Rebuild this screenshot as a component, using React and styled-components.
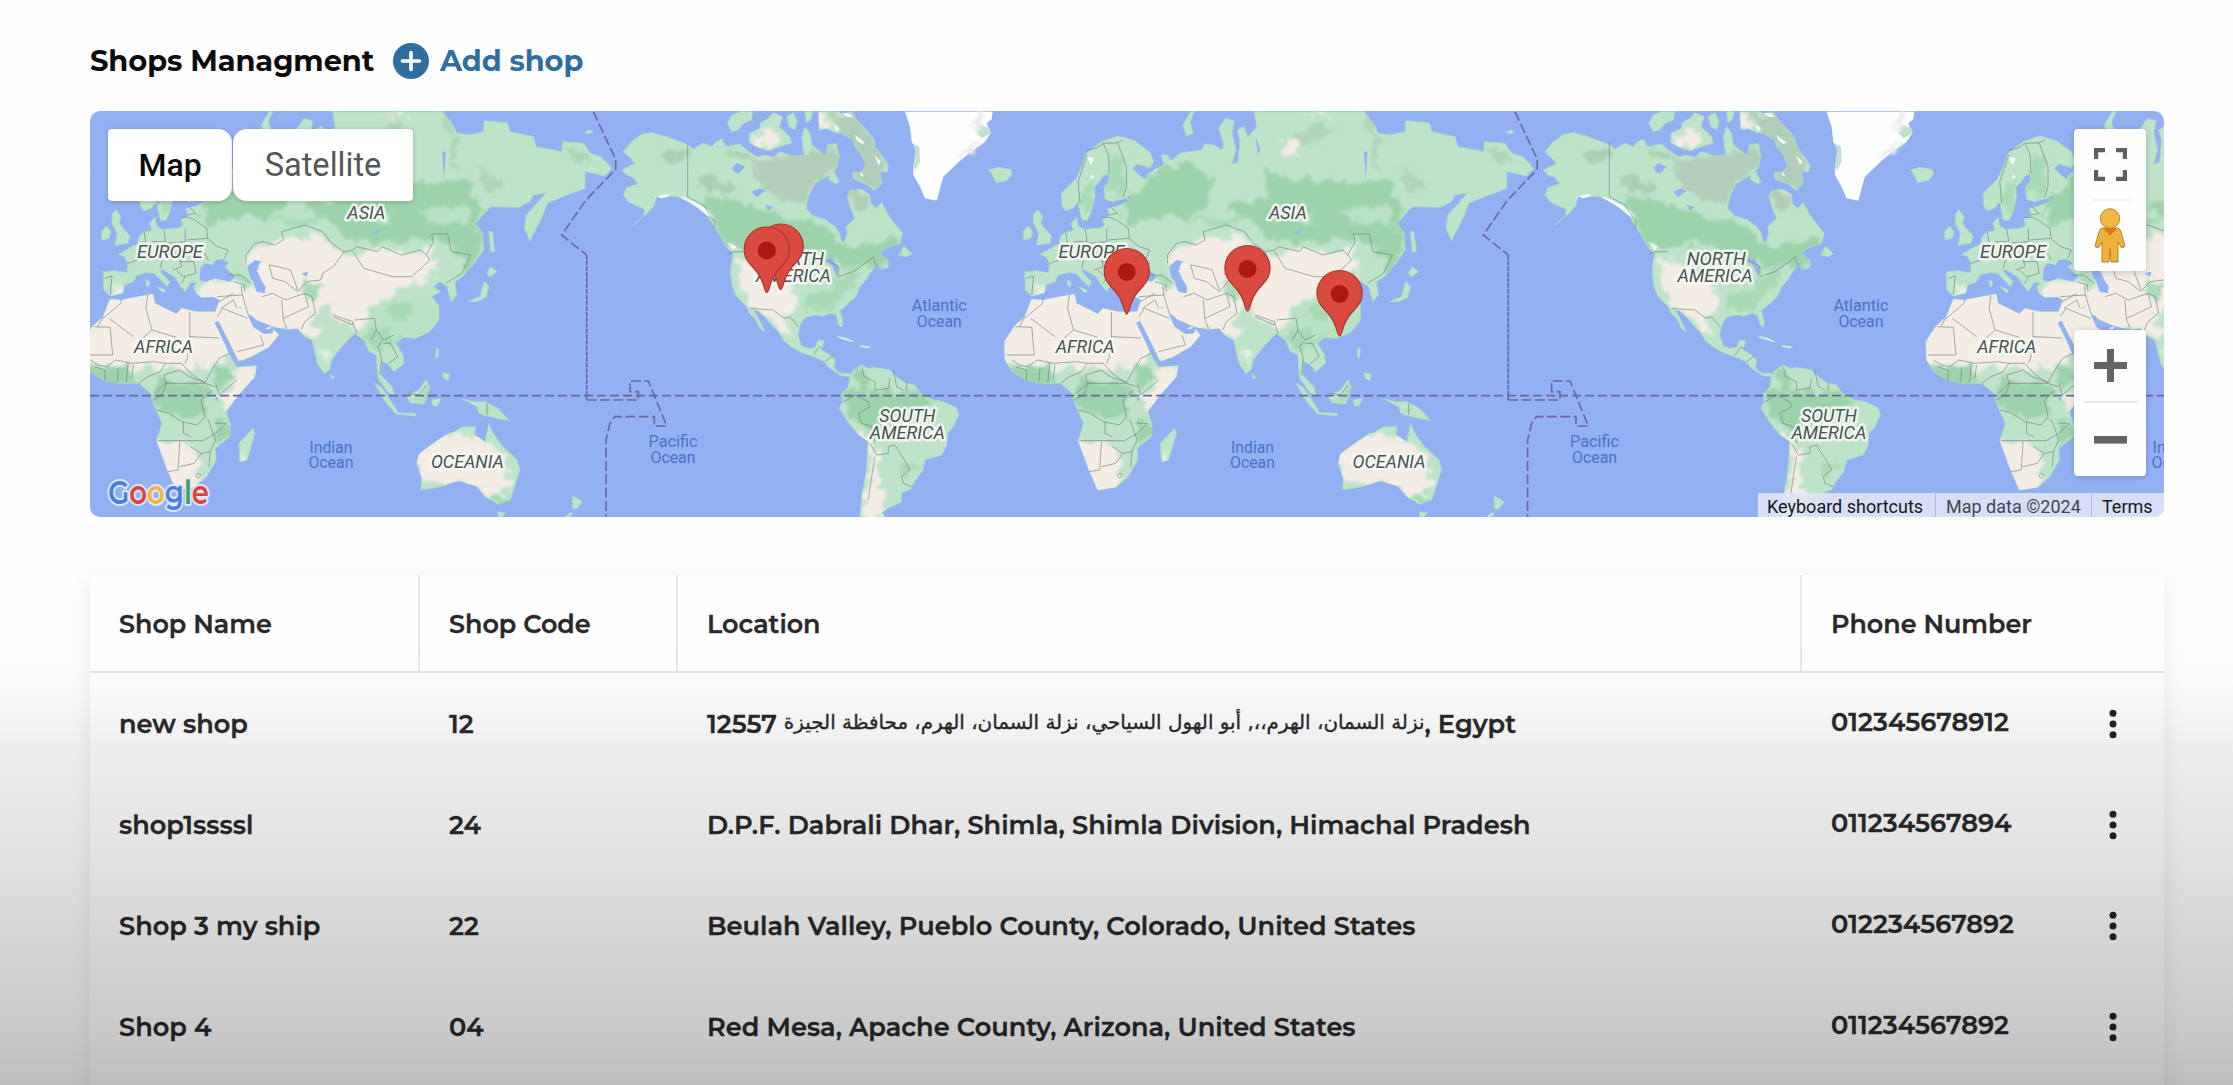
import React from "react";
import styled, { createGlobalStyle } from "styled-components";

const GlobalStyle = createGlobalStyle`
  * { box-sizing: border-box; }
  html, body { margin: 0; padding: 0; background: #fefefe; overflow: hidden; }
  button { border: 0; padding: 0; background: none; font: inherit; color: inherit; cursor: pointer; }
`;

const ui = `Montserrat, Inter, "Noto Sans", sans-serif`;
const mapFont = `Roboto, "Liberation Sans", sans-serif`;

const Page = styled.main`
  position: relative;
  width: 100%;
  height: 1085px;
  padding: 36px 69px 0 90px;
  overflow: hidden;
  background: #fefefe;
  font-family: ${ui};
  color: #29292b;
`;

const Fade = styled.div`
  position: absolute;
  inset: 640px 0 0 0;
  pointer-events: none;
  background: linear-gradient(
    rgba(0, 0, 0, 0) 0%,
    rgba(0, 0, 0, 0.01) 9%,
    rgba(0, 0, 0, 0.06) 23%,
    rgba(0, 0, 0, 0.115) 49%,
    rgba(0, 0, 0, 0.17) 70%,
    rgba(0, 0, 0, 0.215) 91%,
    rgba(0, 0, 0, 0.26) 100%
  );
`;

const Header = styled.header`
  display: flex;
  align-items: center;
  height: 49px;
  gap: 18px;
`;

const Title = styled.h1`
  margin: 0;
  width: 285px;
  font-size: 28.9px;
  font-weight: 700;
  letter-spacing: -0.1px;
  white-space: nowrap;
  color: #0b0b0c;
`;

const AddButton = styled.button`
  display: flex;
  align-items: center;
  gap: 11px;
  color: #2e6f9f;
  font-size: 28.8px;
  font-weight: 700;
  letter-spacing: -0.1px;
  white-space: nowrap;
`;

const MapFrame = styled.section`
  position: relative;
  width: 2074px;
  height: 406px;
  margin-top: 26px;
  border-radius: 10px;
  overflow: hidden;
  background: #93b1f2;
  font-family: ${mapFont};
`;

const MapCanvas = styled.svg`
  display: block;
  width: 100%;
  height: 100%;
`;

const TypeSwitch = styled.div`
  position: absolute;
  left: 18px;
  top: 18px;
  display: flex;
  gap: 1px;
`;

const TypeButton = styled.button`
  width: ${(p) => p.$width}px;
  height: 72px;
  border-radius: ${(p) => (p.$first ? "4px 14px 14px 4px" : "14px 4px 4px 14px")};
  background: #fff;
  box-shadow: 0 1px 5px rgba(0, 0, 0, 0.2);
  font-size: ${(p) => (p.$first ? 32 : 32.6)}px;
  font-weight: ${(p) => (p.$first ? 500 : 400)};
  color: ${(p) => (p.$first ? "#0a0a0a" : "#565656")};
`;

const ControlStack = styled.div`
  position: absolute;
  right: 18px;
  top: ${(p) => p.$top}px;
  width: 72px;
  display: flex;
  flex-direction: column;
  align-items: center;
  border-radius: 4px;
  background: #fefefe;
  box-shadow: 0 1px 6px rgba(0, 0, 0, 0.2);
`;

const Control = styled.button`
  display: flex;
  align-items: center;
  justify-content: center;
  width: 72px;
  height: ${(p) => p.$height}px;
`;

const ControlRule = styled.div`
  width: ${(p) => p.$width}px;
  height: 2px;
  background: ${(p) => p.$color};
`;

const Attribution = styled.div`
  position: absolute;
  right: 0;
  bottom: 0;
  display: flex;
  height: 24px;
  color: #2a2a2e;
  font-size: 18px;
  line-height: 27px;
`;

const Credit = styled.span`
  width: ${(p) => p.$width}px;
  padding-left: ${(p) => (p.$rule ? 10 : 9)}px;
  border-left: ${(p) => (p.$rule ? "1px solid #a9b8e2" : "0")};
  background: rgba(222, 228, 246, 0.9);
  color: ${(p) => (p.$soft ? "#45464c" : "#16171b")};
  white-space: nowrap;
`;

const Table = styled.section`
  width: 2074px;
  height: 560px;
  margin-top: 58px;
  background: #fefefe;
  box-shadow: 0 6px 20px rgba(0, 0, 0, 0.085);
`;

const Row = styled.div`
  display: grid;
  grid-template-columns: 330px 258px 1124px 362px;
  height: 101px;
  font-size: 25.6px;
  font-weight: 600;
  letter-spacing: 0.04px;
  -webkit-text-stroke: 0.35px currentColor;
`;

const HeadRow = styled(Row)`
  height: 98px;
  font-size: 25.4px;
  letter-spacing: 0;
  border-bottom: 2px solid #e1e1e1;
`;

const Cell = styled.div`
  display: flex;
  align-items: center;
  padding: 0 32px 0 29px;
  white-space: nowrap;
`;

const HeadCell = styled(Cell)`
  border-right: ${(p) => (p.$last ? "0" : "2px solid #e7e7e7")};
`;

const PhoneCell = styled(Cell)`
  justify-content: space-between;
`;

const Phone = styled.span`
  padding-bottom: 5px;
`;

const MenuButton = styled.button`
  display: flex;
  margin-right: 14px;
`;

const Address = styled.span`
  display: flex;
  align-items: center;
`;

const Arabic = styled.bdi`
  margin: -3px 0 0 7px;
  font-family: "DejaVu Sans", sans-serif;
  font-size: 19.9px;
  font-weight: 400;
  letter-spacing: 0;
`;

const LAND = "#bfe3c9";
const CREAM = "#f3ede5";
const GREEN = "#9dd3ab";

const AMERICAS =
  "M185,210 L225,190 L212,176 L190,155 L215,125 L245,103 L275,98 L320,110 L360,125 L385,135 L400,147 L430,130 L455,140 L468,125 L485,118 L498,140 L540,132 L560,150 L590,170 L615,165 L640,172 L660,155 L700,168 L732,165 L725,110 L735,80 L750,100 L756,135 L775,150 L798,168 L803,135 L830,130 L838,170 L830,205 L800,230 L765,250 L745,290 L738,325 L760,348 L795,358 L825,380 L838,398 L843,422 L852,428 L862,400 L858,380 L885,355 L872,325 L862,290 L868,272 L905,268 L930,285 L932,310 L948,325 L965,308 L985,345 L1010,378 L1028,400 L1020,430 L975,445 L960,462 L985,480 L985,503 L960,508 L955,488 L930,520 L918,540 L900,560 L887,590 L860,615 L840,632 L848,665 L846,682 L836,675 L828,645 L810,640 L790,648 L765,645 L735,652 L720,675 L714,705 L725,738 L745,745 L765,742 L775,720 L792,722 L785,750 L815,768 L825,780 L822,805 L840,820 L870,820 L872,829 L845,828 L810,805 L790,783 L755,768 L725,758 L695,742 L672,722 L655,695 L635,675 L612,648 L590,630 L583,632 L600,665 L615,695 L600,685 L585,655 L568,640 L562,622 L530,590 L517,560 L512,520 L514,490 L520,462 L500,442 L485,415 L463,380 L445,350 L415,325 L390,308 L360,292 L330,288 L305,295 L290,288 L282,318 L262,340 L218,376 L250,350 L255,328 L230,318 L205,305 L190,285 L200,262 L235,252 L218,232 L200,225 Z " +
  "M870,830 L880,810 L905,795 L925,805 L945,802 L990,810 L1010,830 L1035,848 L1065,855 L1082,880 L1120,900 L1150,905 L1188,922 L1197,945 L1180,980 L1163,1000 L1160,1035 L1145,1065 L1095,1080 L1088,1112 L1060,1150 L1052,1168 L1025,1178 L1025,1205 L985,1225 L965,1237 L978,1255 L900,1255 L905,1190 L918,1120 L925,1025 L895,1003 L870,975 L838,925 L848,905 L846,880 L865,862 Z";

const ARCTIC =
  "M502,70 L515,45 L540,35 L578,35 L575,60 L550,70 L535,90 L515,95Z M568,100 L600,85 L600,70 L625,55 L640,38 L668,50 L658,80 L690,110 L695,130 L665,138 L625,152 L600,145 L568,128Z M680,50 L700,38 L712,65 L705,90 L688,80Z M735,35 L758,35 L752,60 L738,68Z M775,35 L835,35 L850,45 L875,35 L895,65 L915,85 L940,115 L945,140 L965,165 L985,195 L982,215 L960,215 L965,250 L945,272 L918,252 L880,237 L878,218 L905,215 L918,195 L905,165 L885,140 L880,120 L845,100 L825,98 L800,85 L778,90Z M805,215 L815,200 L838,245 L828,252 L808,240Z M1015,465 L1032,438 L1055,462 L1040,470Z M75,97 L90,90 L98,97 L85,102Z";

const EURASIA =
  "M125,515 L160,512 L192,518 L195,490 L185,470 L168,463 L205,440 L222,432 L225,410 L240,395 L262,392 L255,370 L270,352 L275,378 L290,388 L330,385 L348,378 L343,358 L362,348 L358,325 L385,318 L420,302 L408,295 L370,305 L350,298 L348,262 L362,240 L362,222 L345,228 L335,245 L320,262 L322,290 L312,335 L300,362 L285,360 L280,335 L275,305 L260,325 L238,332 L230,318 L228,280 L270,235 L285,200 L298,160 L340,125 L385,108 L430,120 L475,155 L487,185 L475,203 L440,192 L428,205 L440,220 L462,238 L470,222 L492,208 L515,195 L508,165 L525,165 L535,182 L562,158 L620,150 L630,132 L655,135 L678,150 L682,130 L668,85 L688,55 L712,62 L706,100 L717,150 L705,192 L722,188 L728,120 L720,90 L738,78 L750,110 L775,82 L768,35 L1075,35 L1105,75 L1115,100 L1150,105 L1190,95 L1192,62 L1258,68 L1265,95 L1330,110 L1338,140 L1410,155 L1412,125 L1470,130 L1490,160 L1520,170 L1550,205 L1530,228 L1505,222 L1475,215 L1475,265 L1425,285 L1368,310 L1355,350 L1320,422 L1305,385 L1310,345 L1340,310 L1365,278 L1330,285 L1320,305 L1290,322 L1210,320 L1168,370 L1188,400 L1190,450 L1165,490 L1132,530 L1110,545 L1115,585 L1100,605 L1088,560 L1068,545 L1050,560 L1070,575 L1045,590 L1065,615 L1065,660 L1040,695 L1000,715 L965,712 L945,730 L965,765 L968,790 L940,815 L925,795 L905,782 L903,825 L935,860 L940,885 L925,880 L895,835 L890,765 L870,755 L855,720 L830,700 L795,738 L765,780 L760,808 L745,822 L725,790 L710,720 L690,710 L670,685 L640,688 L600,680 L575,668 L545,655 L530,635 L510,620 L445,650 L440,635 L452,600 L435,590 L400,592 L385,580 L378,560 L388,548 L370,548 L355,575 L340,555 L325,530 L290,508 L285,515 L312,545 L305,560 L268,520 L245,518 L220,525 L210,545 L185,555 L180,578 L145,588 L127,570Z " +
  "M145,598 L175,600 L265,582 L270,610 L330,642 L345,625 L385,635 L440,635 L450,620 L520,625 L545,655 L570,692 L590,680 L600,685 L617,705 L590,740 L540,770 L500,785 L485,755 L470,740 L448,690 L470,745 L490,785 L500,802 L555,797 L550,830 L500,890 L470,935 L482,975 L480,1010 L440,1045 L442,1080 L415,1130 L380,1162 L330,1170 L305,1110 L275,1022 L290,970 L265,910 L258,880 L225,850 L170,850 L130,842 L90,815 L70,780 L68,725 L95,680 L125,650Z";

const ISLANDS =
  "M150,342 L162,330 L175,350 L170,370 L200,408 L195,430 L158,436 L165,402 L150,370Z M120,395 L135,378 L147,395 L142,415 L122,420Z M25,210 L50,202 L85,208 L90,222 L75,242 L45,248 L35,225Z M508,1085 L505,1030 L545,985 L550,1000 L528,1080Z M1145,605 L1180,590 L1192,545 L1205,558 L1198,592 L1172,605Z M1200,520 L1210,500 L1228,515 L1208,530Z M1205,393 L1215,395 L1222,455 L1210,455Z M885,850 L905,862 L945,925 L950,938 L1000,940 L1000,948 L945,942 L915,905Z M975,888 L1010,870 L1030,838 L1040,860 L1025,912 L985,908Z M1045,900 L1070,895 L1062,918 L1048,918Z M1132,898 L1165,905 L1195,905 L1230,925 L1262,962 L1228,955 L1200,948 L1178,940 L1172,920Z M1058,745 L1065,748 L1062,775 L1056,770Z M1075,818 L1095,822 L1092,842 L1078,835Z M762,822 L773,832 L765,837Z M590,35 L568,75 L578,108 L597,100 L588,65 L600,35Z M1230,1235 L1252,1238 L1242,1252 L1232,1250Z M1440,1188 L1468,1205 L1450,1228 L1440,1225Z M1418,1252 L1432,1238 L1440,1240 L1430,1253Z M275,560 L300,570 L295,578Z M245,540 L255,545 L253,560 L246,558Z M1475,95 L1490,90 L1495,98Z M1010,1062 L1050,1030 L1092,1000 L1105,998 L1130,980 L1168,980 L1165,1005 L1195,1025 L1205,972 L1218,1000 L1240,1035 L1285,1080 L1292,1110 L1280,1150 L1265,1200 L1230,1212 L1195,1190 L1170,1158 L1120,1142 L1070,1160 L1015,1170 L1018,1135 L1003,1090Z";

const PINS = [
  [780.7, 289],
  [766.8, 292],
  [1126.8, 313.5],
  [1247.5, 310.5],
  [1339.6, 335.5],
];

const LANDMASS_LABELS = [
  ["ASIA", 1287.9, 218.5, 38],
  ["EUROPE", 1091.5, 258, 66],
  ["AFRICA", 1085.2, 352.7, 59],
  ["OCEANIA", 1389, 468, 73],
  ["NORTH", 794.6, 264.5, 59],
  ["AMERICA", 793.5, 281.5, 75],
  ["SOUTH", 907.3, 422, 56],
  ["AMERICA", 907.3, 439.2, 75],
];

const OCEAN_LABELS = [
  ["Indian", 1252.5, 452.5, 43],
  ["Ocean", 1252.5, 468, 45],
  ["Atlantic", 939.3, 310.5, 55],
  ["Ocean", 939.3, 327, 45],
  ["Pacific", 673, 446.5, 49],
  ["Ocean", 673, 462.5, 45],
];

const border = { fill: "none", stroke: "#6f7c78", strokeWidth: 2.4, strokeLinejoin: "round", opacity: 0.75 };

function World() {
  return (
    <g id="world">
      <g transform="translate(560 100) scale(0.33333)">
        <path d={AMERICAS + ARCTIC} fill={LAND} stroke="#a3dac6" strokeWidth="2.5" filter="url(#coast)" />
        <g clipPath="url(#americasClip)">
          <g filter="url(#terrain)">
            <path d="M430,275 L520,300 L600,330 L690,350 L790,380 L850,440 L940,430 L1030,410 L985,500 L900,500 L840,500 L760,460 L650,430 L560,450 L500,440 L450,350Z" fill={GREEN} />
            <path d="M580,180 L700,165 L835,130 L830,205 L760,250 L740,320 L660,305 L610,270 L580,230Z" fill="#b4cfb9" />
            <path d="M860,270 L930,280 L930,310 L900,335 L870,320Z" fill="#b2cdb6" />
            <path d="M800,35 L900,60 L985,195 L960,270 L880,235 L905,165 L840,100Z" fill="#b1ceba" />
            <path d="M410,225 L480,230 L520,260 L500,280 L420,255Z M290,165 L380,140 L400,160 L330,185Z M500,140 L560,150 L590,190 L520,175Z" fill="#accfb4" />
            <path d="M568,118 L640,85 L660,120 L620,150Z M780,35 L800,35 L798,80 L782,88Z" fill={CREAM} />
            <path d="M740,590 L860,580 L820,630 L740,640Z M820,540 L900,500 L880,560 L800,600Z" fill="#a9d9b5" />
            <path d="M535,478 L560,470 L700,560 L705,600 L700,640 L672,650 L692,712 L670,700 L640,655 L580,622 L545,575 L540,520Z" fill={CREAM} />
            <path d="M845,870 L1060,870 L1130,905 L1060,940 L960,950 L960,1000 L890,980 L850,920Z M880,800 L940,860 L900,880Z" fill={GREEN} />
            <path d="M880,985 L945,1030 L965,1065 L950,1110 L965,1180 L975,1255 L915,1255 L928,1110 L935,1050Z" fill={CREAM} />
            <path d="M1010,1080 L1080,1090 L1040,1140 L1020,1120Z" fill="#a9d9b5" />
          </g>
          <path d="M285,290 L320,282 L345,294 L370,290 L410,310 L445,330 L460,355 L440,345 L400,318 L345,300 L290,302Z M500,425 L530,440 L520,450Z" fill="#f5f9f8" filter="url(#coast)" />
          <path d="M515,205 L530,190 L555,200 L535,222Z M575,275 L600,265 L615,272 L590,292Z M615,315 L640,320 L625,332Z M540,212 L525,218 L518,210Z M790,480 L815,475 L835,500 L830,530 L815,495Z" fill="#93b2f2" filter="url(#coast)" />
        </g>
        <path d="M1035,35 L1298,35 L1295,58 L1280,70 L1292,100 L1275,125 L1240,150 L1200,182 L1150,230 L1130,302 L1095,295 L1080,260 L1060,225 L1060,200 L1068,150 L1055,125 L1050,80Z" fill="#fdfefe" filter="url(#coast)" />
        <path d="M1058,130 L1078,140 L1080,185 L1066,210 L1060,200 L1068,160Z M1262,75 L1290,85 L1294,100 L1265,115 L1250,98Z" fill="#bfdfcf" filter="url(#coast)" />
        <path d="M1205,180 L1240,150 L1275,122 L1220,135 L1190,180Z M1240,35 L1270,35 L1245,95Z" fill="#ecebe9" filter="url(#terrain)" />
        <path d="M845,40 L865,38 L880,52 L862,50Z M885,105 L915,128 L905,132 L890,120Z M943,165 L963,185 L955,195Z M820,72 L838,85 L830,95Z M904,215 L912,230 L900,225Z" fill="#f7fbfa" />
        <path d="M828,708 L855,712 L885,725 L870,725 L835,714Z M900,735 L935,740 L925,745 L902,742Z" fill="#c9ead8" />
        <path d="M383,130 L383,290 L430,315 L463,365 L462,385 M505,462 L520,455 L560,455 M800,480 L835,500 L835,530 L880,515 L930,480 L940,470 L950,500 M570,625 L640,630 L672,655 L690,650 L715,680 M760,765 L778,740 L790,748 M795,785 L818,768 M905,800 L912,830 L945,845 L945,870 L985,865 L990,835 M1000,812 L1010,860 L1030,870 M1040,845 L1040,870 M850,905 L885,885 L925,905 L930,920 L895,940 L905,970 L935,980 L945,1030 M930,1030 L950,1065 L985,1060 L985,1040 L1005,1035 L1020,1060 L1040,1090 L1050,1110 L1025,1130 L1030,1150 L1055,1160 M945,1070 L935,1130 L925,1200" {...border} />
      </g>

      <g transform="translate(980 100) scale(0.357143 0.33333)">
        <path d={EURASIA + ISLANDS} fill={LAND} stroke="#a3dac6" strokeWidth="2.5" filter="url(#coast)" />
        <g clipPath="url(#eurasiaClip)">
          <g filter="url(#terrain)">
            <path d="M400,310 L470,230 L520,200 L600,190 L650,240 L640,320 L580,355 L470,350 L410,380Z" fill={GREEN} />
            <path d="M800,200 L830,215 L860,240 L1160,245 L1160,290 L1200,320 L1165,380 L1190,450 L1140,520 L1110,440 L1050,410 L960,430 L800,420 L760,370 L700,340 L700,310 L800,300Z" fill={GREEN} />
            <path d="M1010,330 L1150,320 L1160,370 L1040,370Z M870,350 L940,340 L920,390Z" fill="#b9e1c4" />
            <path d="M355,250 L365,170 L400,165 L410,270 L370,300Z M280,260 L320,240 L310,340 L290,350Z M580,360 L760,340 L700,380Z" fill="#a9dbb6" />
            <path d="M880,110 L940,70 L1000,80 L960,120 L900,140 L880,180 L855,170Z M1420,140 L1480,155 L1490,190 L1440,180Z M1180,190 L1210,230 L1240,250 L1215,285 L1190,270Z M1100,100 L1120,120 L1110,210 L1098,200Z M1080,90 L1100,35 L1110,110Z" fill="#b0d4b8" />
            <path d="M845,130 L870,120 L900,135 L890,170 L855,170Z M905,35 L980,35 L950,52Z" fill={CREAM} />
            <path d="M530,455 L610,430 L730,400 L770,435 L790,460 L840,470 L860,445 L960,455 L1050,440 L1050,490 L1065,510 L1030,530 L970,560 L920,600 L890,630 L870,660 L840,680 L780,660 L745,620 L720,635 L705,670 L745,690 L710,710 L670,700 L540,670 L500,650 L440,660 L440,595 L385,590 L395,550 L500,555 L560,575 L540,525Z" fill={CREAM} />
            <path d="M150,530 L175,550 L170,570 L150,555Z" fill="#eef1ea" />
            <path d="M680,535 L735,545 L720,590 L700,600 L690,570Z M505,520 L540,545 L530,560 L490,545Z" fill="#abdcba" />
            <path d="M870,610 L950,600 L1075,620 L1070,670 L1010,725 L970,720 L880,690 L870,640Z" fill="#b9e2c5" />
            <path d="M930,620 L990,610 L970,660 L920,650Z M870,660 L900,690 L960,715 L940,745 L890,740 L860,720Z" fill="#a6d9b4" />
            <path d="M60,580 L280,570 L360,620 L440,620 L620,650 L625,760 L500,800 L480,755 L440,790 L380,810 L200,800 L120,795 L60,790Z" fill={CREAM} />
            <path d="M500,805 L570,790 L565,840 L510,900 L475,940 L440,885 L485,865Z" fill={CREAM} />
            <path d="M290,840 L380,850 L420,860 L410,950 L330,950 L290,930 L258,890Z M430,800 L480,800 L490,840 L450,860Z M80,800 L210,800 L220,850 L130,850Z M440,970 L480,970 L480,1010 L440,1040Z" fill={GREEN} />
            <path d="M265,1025 L335,1025 L375,1045 L400,1085 L380,1115 L405,1135 L370,1175 L310,1180Z" fill={CREAM} />
            <path d="M1000,1050 L1090,1000 L1165,1010 L1215,1030 L1250,1080 L1265,1115 L1255,1170 L1205,1190 L1160,1155 L1110,1140 L1060,1150 L1005,1150Z" fill={CREAM} />
            <path d="M1010,870 L1040,860 L1020,905 L990,900Z M1175,915 L1225,925 L1220,948Z M1195,1190 L1255,1180 L1240,1212Z" fill="#a3d9b0" />
            <path d="M508,1060 L522,1050 L522,1080 L508,1085Z M735,760 L755,765 L745,790Z" fill="#eef2ea" />
          </g>
          <path d="M300,170 L320,175 L310,195Z M310,225 L320,228 L312,240Z M483,205 L498,205 L490,215Z" fill="#f7fbf8" />
        </g>
        <path d="M395,540 L398,505 L410,490 L432,495 L440,480 L462,478 L478,490 L465,500 L495,530 L480,545 L440,535 L410,545Z M530,500 L550,480 L572,485 L570,505 L555,510 L568,540 L580,560 L578,580 L555,575 L545,545 L535,530Z M437,668 L448,662 L480,730 L500,775 L505,788 L490,780 L468,735Z M528,640 L545,650 L572,685 L590,688 L605,678 L600,700 L575,702 L545,680Z M680,520 L700,515 L695,530Z M772,110 L785,150 L778,165Z M1075,155 L1085,155 L1080,240Z M412,288 L425,290 L418,298Z M895,400 L900,385 L880,405Z M438,895 L448,890 L445,905Z" fill="#93b2f2" filter="url(#coast)" />
        <path d="M565,485 L578,490 L570,510 L558,505Z M500,604 L510,615 L505,620Z" fill="#e9f2fb" />
        <path d="M300,150 L325,145 L345,130 L385,128 L400,120 M345,130 L360,165 L362,220 M385,128 L410,200 L410,260 L400,292 M300,165 L275,245 L280,310 M240,395 L245,430 L220,432 M295,388 L300,425 L262,425 M355,385 L355,425 L300,430 M385,362 L415,385 L418,415 L358,420 M345,352 L365,352 L385,362 M365,320 L385,340 L360,345 M418,415 L445,440 L475,450 L465,475 M240,440 L235,475 L195,490 M130,535 L150,528 L145,585 M235,475 L290,480 L285,505 M300,440 L340,470 L345,500 L320,510 M340,485 L380,485 L385,520 L350,530 L330,510 M355,530 L345,550 M395,440 L420,480 M475,525 L510,525 L540,550 M490,545 L520,555 L522,575 M525,490 L525,465 L550,430 L575,425 L605,435 L630,420 L625,395 L690,375 L740,395 L765,430 L800,455 L825,450 L835,440 L895,455 L905,440 L960,465 L1015,450 L1030,465 L1040,480 L990,530 L935,530 L855,505 L825,455 M1030,465 L1050,425 L1045,402 L1090,402 L1100,455 L1155,465 L1130,520 L1085,550 M800,455 L770,500 L740,520 L735,540 L695,545 L670,575 L635,545 L600,535 L590,495 L615,500 L650,510 L670,570 M570,590 L600,580 L635,600 L690,580 L710,590 L720,640 L690,665 L680,690 M445,590 L515,585 L512,560 M515,585 L530,640 M450,605 L490,580 M455,625 L490,600 L500,625 M445,650 L460,625 L530,655 M625,600 L630,660 L640,685 M690,580 L700,620 L630,655 M770,645 L825,665 L825,675 L770,650 M830,660 L885,655 L890,690 L875,720 M835,700 L825,670 M890,690 L910,720 L940,705 M895,740 L905,775 L900,825 M910,730 L930,730 L950,770 L925,790 M905,725 L895,740 M500,755 L575,735 L565,705 M142,655 L210,710 M125,655 L175,610 L178,595 M100,680 L145,682 L152,765 L75,765 M125,650 L110,680 M250,585 L245,625 L262,690 L235,715 M262,690 L330,712 M368,635 L368,710 L450,714 M368,710 L362,770 L355,790 M90,780 L110,795 L135,800 L160,780 L205,790 L270,785 L300,790 L345,790 M130,842 L130,810 L100,800 M165,845 L168,805 M190,848 L195,790 M205,835 L210,795 M225,850 L250,830 L285,815 L300,790 M270,880 L300,850 L295,825 L340,810 L365,830 L410,848 M300,850 L410,850 L440,860 M345,790 L375,825 L410,848 L430,810 L450,775 L480,760 M440,850 L450,885 L500,840 M265,900 L290,885 L305,845 M275,930 L310,940 L345,965 L390,975 L410,950 L400,900 L430,870 M350,965 L350,1000 L370,1010 M278,1022 L405,1022 L440,1000 L470,970 L440,970 M340,1025 L335,1110 L305,1115 M340,1100 L380,1090 L400,1060 L370,1040 M400,1060 L425,1055 L440,1020 L420,960 M425,1055 L422,1100 M390,1120 L400,1125 L390,1135 L385,1128Z M978,880 L1010,885 L1030,855 M1200,910 L1200,945" {...border} />
      </g>

      <g transform="translate(560 100) scale(0.33333)">
        <path d="M100,35 L167,178 V208 L78,300 L5,405 L80,465" fill="none" stroke="#6a689b" strokeWidth="5" strokeDasharray="30 10" />
        <path d="M80,465 V900" fill="none" stroke="#66679c" strokeWidth="5" strokeDasharray="14 3" />
        <path d="M80,900 H235 V875 H210 V843 H265 L320,978 H283 V950 H165 L150,970 L138,1020 V1250" fill="none" stroke="#6a689b" strokeWidth="5" strokeDasharray="30 10" />
      </g>

      <g fontFamily="Roboto, sans-serif" textAnchor="middle">
        {LANDMASS_LABELS.map(([text, x, y, width]) => (
          <text key={text + y} x={x} y={y} fontSize="18" fontStyle="italic" textLength={width} lengthAdjust="spacingAndGlyphs" fill="#4c5351" stroke="#f6faf6" strokeWidth="5" strokeLinejoin="round" strokeOpacity="0.9" paintOrder="stroke">
            {text}
          </text>
        ))}
        {OCEAN_LABELS.map(([text, x, y, width]) => (
          <text key={text + x + y} x={x} y={y} fontSize="16" textLength={width} lengthAdjust="spacingAndGlyphs" fill="#4a71c6">
            {text}
          </text>
        ))}
      </g>
    </g>
  );
}

function Pin({ x, y }) {
  return (
    <g transform={`translate(${x} ${y})`}>
      <path d="M0,0.5 C-1.6,0.5 -2,-3 -4,-9 C-6,-15 -10,-21 -15,-26 C-19.5,-31 -22.6,-35 -22.6,-42.4 A22.6,22.6 0 0 1 22.6,-42.4 C22.6,-35 19.5,-31 15,-26 C10,-21 6,-15 4,-9 C2,-3 1.6,0.5 0,0.5Z" fill="#db4a3e" stroke="#a5382f" strokeWidth="1.2" />
      <circle cx="0" cy="-41.6" r="9" fill="#b01712" />
    </g>
  );
}

const GOOGLE = [
  ["G", "#4a7fe0"],
  ["o", "#d8453c"],
  ["o", "#efb63c"],
  ["g", "#4a7fe0"],
  ["l", "#3f9f5c"],
  ["e", "#d8453c"],
];

function WorldMap() {
  return (
    <MapCanvas viewBox="90 111 2074 406">
      <defs>
        <filter id="terrain" x="-5%" y="-5%" width="110%" height="110%">
          <feTurbulence type="fractalNoise" baseFrequency="0.03" numOctaves="4" seed="9" result="noise" />
          <feDisplacementMap in="SourceGraphic" in2="noise" scale="60" xChannelSelector="R" yChannelSelector="G" />
          <feGaussianBlur stdDeviation="5" />
        </filter>
        <filter id="coast" x="-2%" y="-2%" width="104%" height="104%">
          <feGaussianBlur stdDeviation="1.8" />
        </filter>
        <clipPath id="americasClip">
          <path d={AMERICAS + ARCTIC} />
        </clipPath>
        <clipPath id="eurasiaClip">
          <path d={EURASIA + ISLANDS} />
        </clipPath>
      </defs>
      <World />
      <use href="#world" x="-921.6" />
      <use href="#world" x="921.6" />
      <path d="M90,395.7 H2164" stroke="#6a689b" strokeWidth="1.8" strokeDasharray="9 4" />
      {PINS.map(([x, y]) => (
        <Pin key={x} x={x} y={y} />
      ))}
      <text x="108" y="504" fontFamily="Montserrat, Lato, sans-serif" fontSize="33" fontWeight="600" textLength="101" lengthAdjust="spacingAndGlyphs" stroke="#dfe8fb" strokeWidth="4" strokeLinejoin="round" paintOrder="stroke">
        {GOOGLE.map(([letter, color], i) => (
          <tspan key={i} fill={color}>
            {letter}
          </tspan>
        ))}
      </text>
    </MapCanvas>
  );
}

const PlusBadge = () => (
  <svg width="36" height="36" viewBox="0 0 36 36">
    <circle cx="18" cy="18" r="18" fill="#2e6f9f" />
    <path d="M18,9.5 V26.5 M9.5,18 H26.5" stroke="#fff" strokeWidth="3.6" strokeLinecap="round" />
  </svg>
);

const FullscreenIcon = () => (
  <svg width="33" height="33" viewBox="0 0 33 33" fill="none" stroke="#5f5f5f" strokeWidth="4.2">
    <path d="M2.1,11 V2.1 H11 M22,2.1 H30.9 V11 M30.9,22 V30.9 H22 M11,30.9 H2.1 V22" />
  </svg>
);

const Pegman = () => (
  <svg width="32" height="56" viewBox="0 0 32 56" stroke="#b9812a" strokeWidth="1">
    <path d="M9,20 H23 Q26,20 27,24 L31,38 Q30,41 27,39 L24,34 V54 H17 L16,40 L15,54 H8 V34 L5,39 Q2,41 1,38 L5,24 Q6,20 9,20Z" fill="#f0b13a" />
    <path d="M9,20 H23 L16,28Z" fill="#d9791f" stroke="none" />
    <circle cx="16" cy="10.5" r="9.7" fill="#f0b840" />
  </svg>
);

const PlusIcon = () => (
  <svg width="33" height="33" viewBox="0 0 33 33" stroke="#646464" strokeWidth="7">
    <path d="M16.5,0 V33 M0,16.5 H33" />
  </svg>
);

const MinusIcon = () => (
  <svg width="33" height="8" viewBox="0 0 33 8">
    <rect width="33" height="7.6" fill="#646464" />
  </svg>
);

const DotsIcon = () => (
  <svg width="10" height="30" viewBox="0 0 10 30" fill="#242426">
    <circle cx="5" cy="4.2" r="3.5" />
    <circle cx="5" cy="15" r="3.5" />
    <circle cx="5" cy="25.8" r="3.5" />
  </svg>
);

const SHOPS = [
  {
    name: "new shop",
    code: "12",
    location: (
      <Address>
        <span>12557</span>
        <Arabic dir="rtl">نزلة السمان، الهرم،،, أبو الهول السياحي، نزلة السمان، الهرم، محافظة الجيزة</Arabic>
        <span>, Egypt</span>
      </Address>
    ),
    phone: "012345678912",
  },
  { name: "shop1ssssl", code: "24", location: "D.P.F. Dabrali Dhar, Shimla, Shimla Division, Himachal Pradesh", phone: "011234567894" },
  { name: "Shop 3 my ship", code: "22", location: "Beulah Valley, Pueblo County, Colorado, United States", phone: "012234567892" },
  { name: "Shop 4", code: "04", location: "Red Mesa, Apache County, Arizona, United States", phone: "011234567892" },
];

export default function App() {
  return (
    <Page>
      <GlobalStyle />
      <Header>
        <Title>Shops Managment</Title>
        <AddButton>
          <PlusBadge />
          Add shop
        </AddButton>
      </Header>

      <MapFrame>
        <WorldMap />
        <TypeSwitch>
          <TypeButton $first $width={124}>Map</TypeButton>
          <TypeButton $width={180}>Satellite</TypeButton>
        </TypeSwitch>
        <ControlStack $top={18}>
          <Control $height={70}><FullscreenIcon /></Control>
          <ControlRule $width={41} $color="#f3f3f4" />
          <Control $height={70}><Pegman /></Control>
        </ControlStack>
        <ControlStack $top={219}>
          <Control $height={71}><PlusIcon /></Control>
          <ControlRule $width={53} $color="#e3e6f0" />
          <Control $height={73}><MinusIcon /></Control>
        </ControlStack>
        <Attribution>
          <Credit $width={177}>Keyboard shortcuts</Credit>
          <Credit $width={156} $rule $soft>Map data ©2024</Credit>
          <Credit $width={73} $rule>Terms</Credit>
        </Attribution>
      </MapFrame>

      <Table>
        <HeadRow>
          <HeadCell>Shop Name</HeadCell>
          <HeadCell>Shop Code</HeadCell>
          <HeadCell>Location</HeadCell>
          <HeadCell $last>Phone Number</HeadCell>
        </HeadRow>
        {SHOPS.map((shop) => (
          <Row key={shop.code}>
            <Cell>{shop.name}</Cell>
            <Cell>{shop.code}</Cell>
            <Cell>{shop.location}</Cell>
            <PhoneCell>
              <Phone>{shop.phone}</Phone>
              <MenuButton aria-label="Shop actions"><DotsIcon /></MenuButton>
            </PhoneCell>
          </Row>
        ))}
      </Table>
      <Fade />
    </Page>
  );
}
